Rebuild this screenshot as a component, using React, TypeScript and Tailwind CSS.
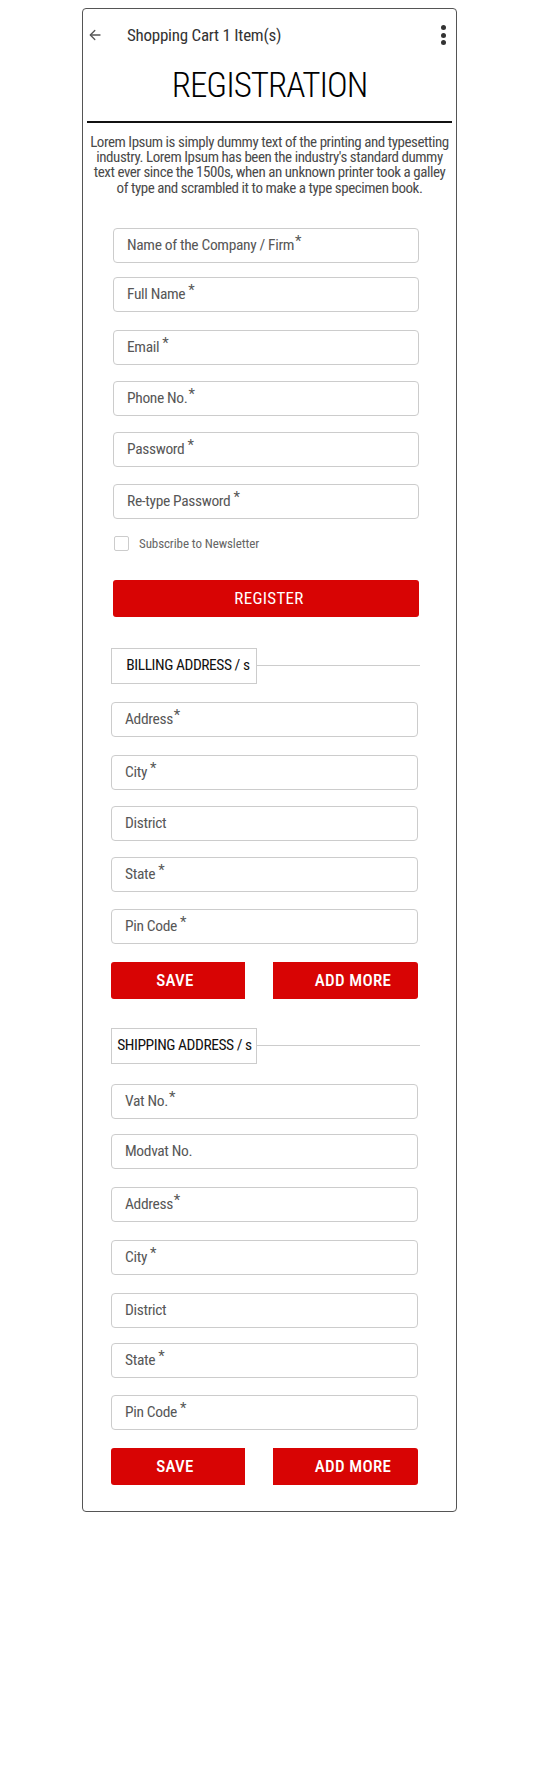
import React from "react";

const FONT = "font-['Roboto_Condensed',Roboto,'Liberation_Sans',sans-serif] [font-stretch:condensed]";

function Star({ space }: { space?: boolean }) {
  return (
    <span className={`relative top-[-4px] text-[15px] ${space ? "ml-[3px]" : "ml-[1px]"}`}>*</span>
  );
}

function Field({ label, star, space, mt }: { label: string; star?: boolean; space?: boolean; mt: string }) {
  return (
    <div
      className={`${mt} h-[35px] w-full border border-[#cccccc] rounded-[4px] bg-white flex items-center pl-[13px] pt-[1px] text-[15.5px] tracking-[-0.35px] text-[#575757] leading-none`}
    >
      <span>{label}</span>
      {star ? <Star space={space} /> : null}
    </div>
  );
}

function SectionHead({ title, mt, pad }: { title: string; mt: string; pad: string }) {
  return (
    <div className={`${mt} flex items-center w-[309px]`}>
      <div
        className={`w-[146px] h-[36px] shrink-0 border border-[#cccccc] flex items-center justify-center ${pad} text-[15.5px] tracking-[-0.45px] text-[#111111] leading-none whitespace-nowrap`}
      >
        {title}
      </div>
      <div className="flex-1 h-px bg-[#cccccc]" />
    </div>
  );
}

function ButtonRow({ mt }: { mt: string }) {
  return (
    <div className={`${mt} flex w-full`}>
      <div className="w-[134px] h-[37px] bg-[#d80404] rounded-l-[3px] flex items-center justify-center pr-[6px] text-white text-[17px] font-medium tracking-[0.3px]">
        SAVE
      </div>
      <div className="ml-auto w-[145px] h-[37px] bg-[#d80404] rounded-r-[3px] flex items-center justify-center pl-[15px] text-white text-[17px] font-medium tracking-[0.3px]">
        ADD MORE
      </div>
    </div>
  );
}

export default function App() {
  return (
    <div className={`w-[556px] min-h-[1766px] bg-white pt-[8px] ${FONT}`}>
      <div className="ml-[82px] w-[375px] h-[1504px] border border-[#555555] rounded-[4px] flex flex-col">
        {/* header */}
        <div className="h-[52px] flex items-center relative">
          <svg
            className="ml-[6px]"
            width="12"
            height="12"
            viewBox="0 0 12 12"
            fill="none"
            stroke="#555555"
            strokeWidth="1.3"
            strokeLinecap="round"
            strokeLinejoin="round"
          >
            <path d="M11 6H1.5" />
            <path d="M5.8 1.5L1.3 6l4.5 4.5" />
          </svg>
          <div className="ml-[26px] text-[17px] tracking-[-0.25px] text-[#333333] leading-none">Shopping Cart 1 Item(s)</div>
          <div className="ml-auto mr-[10px] flex flex-col gap-[2.5px]">
            <span className="block w-[5px] h-[5px] rounded-full bg-[#333333]" />
            <span className="block w-[5px] h-[5px] rounded-full bg-[#333333]" />
            <span className="block w-[5px] h-[5px] rounded-full bg-[#333333]" />
          </div>
        </div>

        {/* title */}
        <div className="mt-[4px] text-center text-[35px] leading-[42px] tracking-[-1px] font-light text-black">REGISTRATION</div>
        <div className="mt-[14px] mx-[4px] h-[2px] bg-[#111111]" />
        <p className="mt-[12px] mx-[2px] text-center text-[15px] tracking-[-0.45px] leading-[15.2px] text-[#4a4a4a] whitespace-nowrap">
          Lorem Ipsum is simply dummy text of the printing and typesetting
          <br />
          industry. Lorem Ipsum has been the industry's standard dummy
          <br />
          text ever since the 1500s, when an unknown printer took a galley
          <br />
          of type and scrambled it to make a type specimen book.
        </p>

        {/* registration form */}
        <div className="ml-[30px] w-[306px] flex flex-col mt-[32px]">
          <Field label="Name of the Company / Firm" star mt="mt-0" />
          <Field label="Full Name" star space mt="mt-[14px]" />
          <Field label="Email" star space mt="mt-[18px]" />
          <Field label="Phone No." star mt="mt-[16px]" />
          <Field label="Password" star space mt="mt-[16px]" />
          <Field label="Re-type Password" star space mt="mt-[17px]" />
          <div className="mt-[18px] flex items-center h-[14px]">
            <span className="block w-[15px] h-[15px] ml-[1px] border border-[#cccccc] rounded-[2px] bg-white" />
            <span className="ml-[10px] text-[13px] tracking-[-0.1px] text-[#666666] leading-none">Subscribe to Newsletter</span>
          </div>
          <div className="mt-[29px] h-[37px] bg-[#d80404] rounded-[3px] flex items-center justify-center pl-[6px] text-white text-[17px] tracking-[0.3px]">
            REGISTER
          </div>
        </div>

        {/* billing */}
        <div className="ml-[28px] w-[307px] flex flex-col">
          <SectionHead title="BILLING ADDRESS / s" mt="mt-[31px]" pad="pl-[8px]" />
          <Field label="Address" star mt="mt-[18px]" />
          <Field label="City" star space mt="mt-[18px]" />
          <Field label="District" mt="mt-[16px]" />
          <Field label="State" star space mt="mt-[16px]" />
          <Field label="Pin Code" star space mt="mt-[17px]" />
          <ButtonRow mt="mt-[18px]" />

          {/* shipping */}
          <SectionHead title="SHIPPING ADDRESS / s" mt="mt-[29px]" pad="pl-[1px]" />
          <Field label="Vat No." star mt="mt-[20px]" />
          <Field label="Modvat No." mt="mt-[15px]" />
          <Field label="Address" star mt="mt-[18px]" />
          <Field label="City" star space mt="mt-[18px]" />
          <Field label="District" mt="mt-[18px]" />
          <Field label="State" star space mt="mt-[15px]" />
          <Field label="Pin Code" star space mt="mt-[17px]" />
          <ButtonRow mt="mt-[18px]" />
        </div>
      </div>
    </div>
  );
}
